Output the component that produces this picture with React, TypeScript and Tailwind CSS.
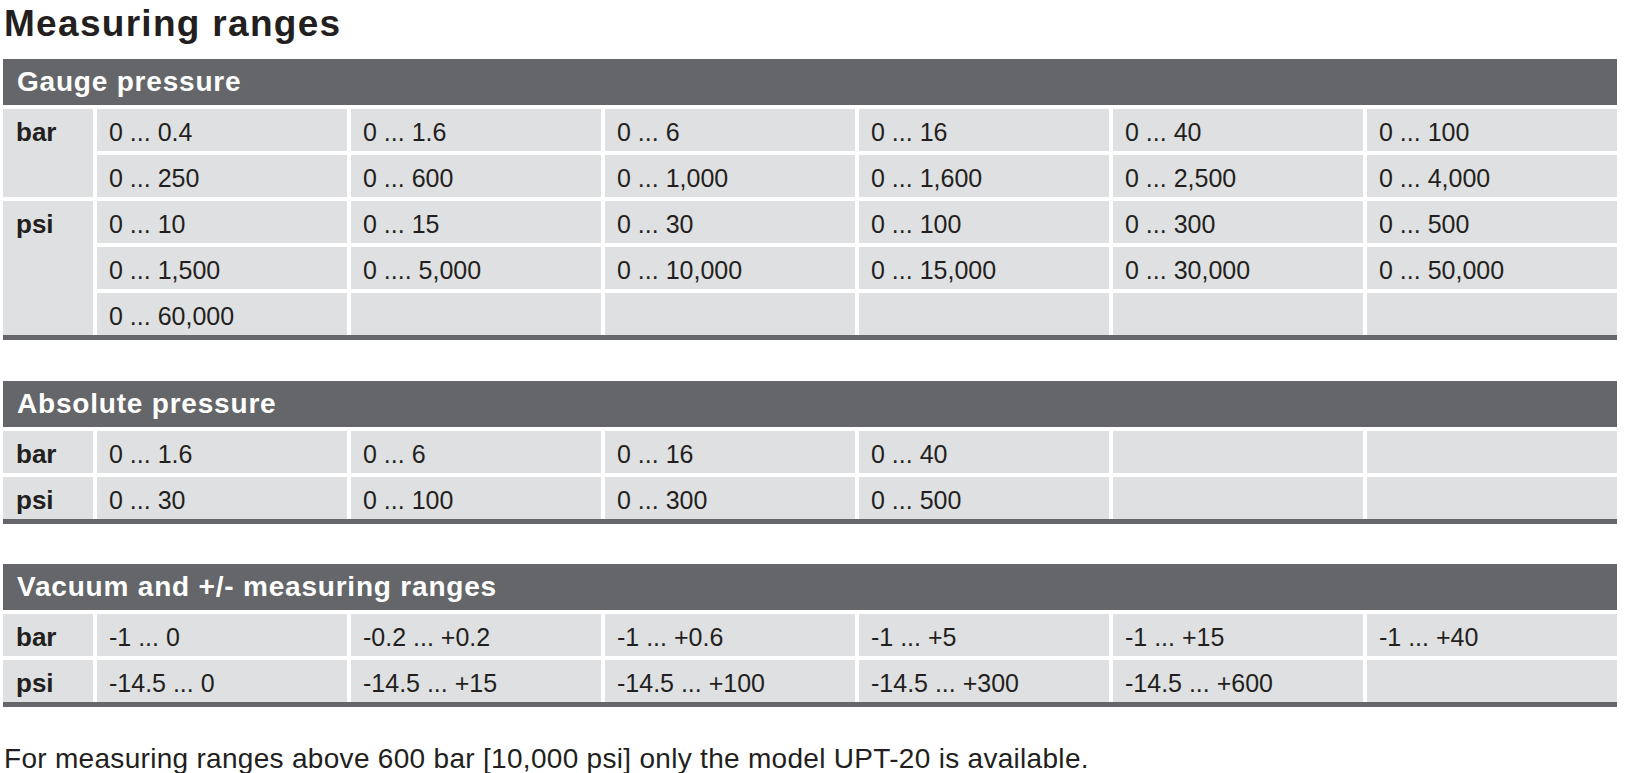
import { type FC } from 'react'

type Group = { unit: string; rows: string[][] }

const gauge: Group[] = [
  {
    unit: 'bar',
    rows: [
      ['0 ... 0.4', '0 ... 1.6', '0 ... 6', '0 ... 16', '0 ... 40', '0 ... 100'],
      ['0 ... 250', '0 ... 600', '0 ... 1,000', '0 ... 1,600', '0 ... 2,500', '0 ... 4,000'],
    ],
  },
  {
    unit: 'psi',
    rows: [
      ['0 ... 10', '0 ... 15', '0 ... 30', '0 ... 100', '0 ... 300', '0 ... 500'],
      ['0 ... 1,500', '0 .... 5,000', '0 ... 10,000', '0 ... 15,000', '0 ... 30,000', '0 ... 50,000'],
      ['0 ... 60,000', '', '', '', '', ''],
    ],
  },
]

const absolute: Group[] = [
  { unit: 'bar', rows: [['0 ... 1.6', '0 ... 6', '0 ... 16', '0 ... 40', '', '']] },
  { unit: 'psi', rows: [['0 ... 30', '0 ... 100', '0 ... 300', '0 ... 500', '', '']] },
]

const vacuum: Group[] = [
  { unit: 'bar', rows: [['-1 ... 0', '-0.2 ... +0.2', '-1 ... +0.6', '-1 ... +5', '-1 ... +15', '-1 ... +40']] },
  { unit: 'psi', rows: [['-14.5 ... 0', '-14.5 ... +15', '-14.5 ... +100', '-14.5 ... +300', '-14.5 ... +600', '']] },
]

const span: Record<number, string> = {
  1: 'row-span-1',
  2: 'row-span-2',
  3: 'row-span-3',
}

const RangeTable: FC<{ title: string; groups: Group[]; className?: string }> = ({ title, groups, className }) => {
  return (
    <section className={className}>
      <div className="h-[46px] bg-[#646669] pl-[14px] text-[28px] font-bold leading-[46px] tracking-[0.8px] text-white">
        {title}
      </div>
      <div className="mt-[4px] grid auto-rows-[42px] grid-cols-[90px_repeat(6,minmax(0,1fr))] gap-[4px] border-b-[5px] border-[#646669]">
        {groups.map((g) => (
          <>
            <div
              key={g.unit}
              className={`${span[g.rows.length]} bg-[#dfe0e1] pl-[13px] pt-[4px] text-[26px] font-bold leading-[38px] text-[#231f20]`}
            >
              {g.unit}
            </div>
            {g.rows.map((row, i) =>
              row.map((v, j) => (
                <div
                  key={`${g.unit}-${i}-${j}`}
                  className="h-[42px] bg-[#dfe0e1] pl-[12px] pt-[4px] text-[25px] leading-[38px] text-[#231f20]"
                >
                  {v}
                </div>
              ))
            )}
          </>
        ))}
      </div>
    </section>
  )
}

const App: FC = () => {
  return (
    <div
      className="min-h-screen bg-white pl-[3px] pr-[9px] text-[#231f20]"
      style={{ fontFamily: '"Liberation Sans", Arial, sans-serif' }}
    >
      <h1 className="ml-[1px] pt-[6px] text-[37px] font-bold leading-[36px] tracking-[1.3px]">Measuring ranges</h1>
      <RangeTable className="mt-[17px]" title="Gauge pressure" groups={gauge} />
      <RangeTable className="mt-[41px]" title="Absolute pressure" groups={absolute} />
      <RangeTable className="mt-[40px]" title="Vacuum and +/- measuring ranges" groups={vacuum} />
      <p className="ml-[1px] mt-[38px] whitespace-nowrap text-[28px] leading-[28px] tracking-[0.3px]">
        For measuring ranges above 600 bar [10,000 psi] only the model UPT-20 is available.
      </p>
    </div>
  )
}

export default App
